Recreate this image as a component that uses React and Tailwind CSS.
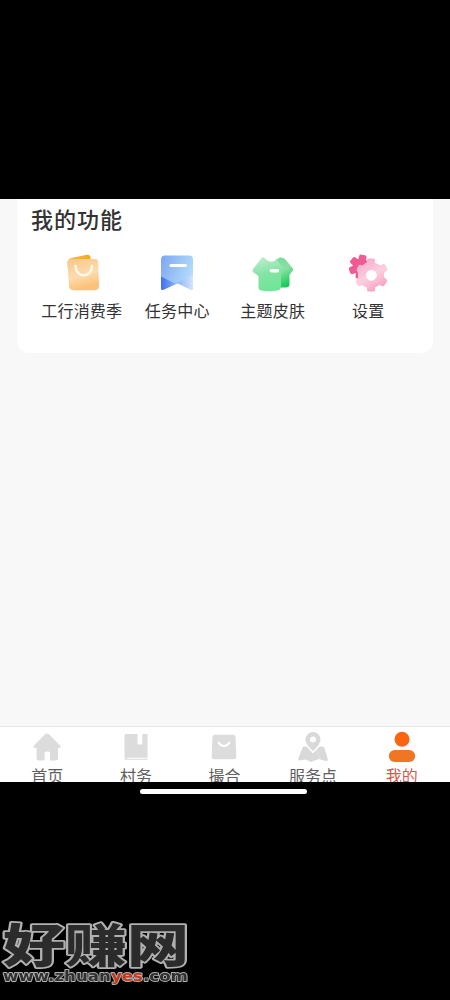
import React, { useState } from 'react'

const BagIcon = () => (
  <svg width="40" height="40" viewBox="0 0 40 40">
    <defs>
      <linearGradient id="bagBack" x1="0" y1="0" x2="1" y2="0">
        <stop offset="0" stopColor="#f3b85c" />
        <stop offset="1" stopColor="#f3ad0c" />
      </linearGradient>
      <linearGradient id="bagFront" x1="0" y1="0" x2="0.3" y2="1">
        <stop offset="0" stopColor="#f8c58c" />
        <stop offset="0.6" stopColor="#fddcae" />
        <stop offset="1" stopColor="#fbc178" />
      </linearGradient>
    </defs>
    <path d="M5.5 10Q5.5 6 9 5L25 1.8Q28 1.6 28.6 4.5V16H6Z" fill="url(#bagBack)" />
    <path d="M8 6H33Q36.3 6 36.2 9L37 33Q37 37 33 37.2H11Q7.2 37 7 33L5.5 11Q5.3 7 8 6Z" fill="url(#bagFront)" />
    <path d="M13.5 13C14 25.5 29.5 25.5 30 13" fill="none" stroke="#fffaf0" strokeWidth="2.4" strokeLinecap="round" />
  </svg>
)

const TaskIcon = () => (
  <svg width="40" height="40" viewBox="0 0 40 40">
    <defs>
      <linearGradient id="task" x1="0" y1="0.2" x2="1" y2="0.6">
        <stop offset="0" stopColor="#82a9f3" />
        <stop offset="0.6" stopColor="#9fcaf8" />
        <stop offset="1" stopColor="#b8dcfb" />
      </linearGradient>
      <linearGradient id="taskLow" x1="0" y1="0" x2="1" y2="0">
        <stop offset="0" stopColor="#416fee" />
        <stop offset="0.5" stopColor="#8eb5f7" />
        <stop offset="1" stopColor="#d1e5fd" />
      </linearGradient>
    </defs>
    <path d="M8 2.5H32Q36 2.5 36 6.5V35Q36 38 33 36.2L20.5 30.3L7 36.5Q4 38 4 35V6.5Q4 2.5 8 2.5Z" fill="url(#task)" />
    <path d="M4 23.5L18 30.5L36 22V35Q36 38 33 36.2L20.5 30.3L7 36.5Q4 38 4 35Z" fill="url(#taskLow)" />
    <path d="M14 12.5H28.5" stroke="#fff" strokeWidth="3" strokeLinecap="round" />
  </svg>
)

const SkinIcon = () => (
  <svg width="44" height="40" viewBox="0 0 44 40">
    <defs>
      <linearGradient id="shirt" x1="0.3" y1="0" x2="0.5" y2="1">
        <stop offset="0" stopColor="#bdeccd" />
        <stop offset="0.5" stopColor="#83e3a3" />
        <stop offset="1" stopColor="#6de796" />
      </linearGradient>
      <linearGradient id="shirtBack" x1="0" y1="0" x2="0.3" y2="1">
        <stop offset="0" stopColor="#74dc98" />
        <stop offset="0.5" stopColor="#88e0a5" />
        <stop offset="1" stopColor="#1bcc5d" />
      </linearGradient>
    </defs>
    <path d="M24 7L29 4.5Q32 4 34 6L41.5 15Q43 17 41 18.5L38.5 22V31Q38.5 34.5 35 34.5H24Z" fill="url(#shirtBack)" />
    <path d="M11 4.5Q13 3.5 15 6.5Q21 11 26 6Q28 11 33 14L30 21V34Q29.5 37 26 37.5Q18 39 10 37.5Q7.5 37 7.5 34V23L2.5 19.5Q1 18 2 16Z" fill="url(#shirt)" />
    <path d="M20.5 17.8H26.5" stroke="#fff" strokeWidth="3.6" strokeLinecap="round" />
  </svg>
)

const teeth = [0, 60, 120, 180, 240, 300]

const SettingIcon = () => (
  <svg width="40" height="40" viewBox="0 0 40 40">
    <defs>
      <linearGradient id="gear" gradientUnits="userSpaceOnUse" x1="12" y1="6" x2="30" y2="38">
        <stop offset="0" stopColor="#f6a8c8" />
        <stop offset="0.55" stopColor="#fbd0e0" />
        <stop offset="1" stopColor="#f89dc0" />
      </linearGradient>
    </defs>
    <g fill="#ef5a95">
      <circle cx="13" cy="14" r="8.5" />
      {teeth.map((a) => (
        <rect key={a} x="9.2" y="1.8" width="7.6" height="8" rx="2" transform={`rotate(${a + 10} 13 14)`} />
      ))}
    </g>
    <path d="M19 9V7Q19 5.5 20.5 5.5H25.5Q27 5.5 27 7V10L33 12.5L35 11Q36.5 10.5 37.3 12L39.3 16Q39.6 17.5 38 18.3L36 20V24L38.3 26Q39.6 27 39 28.5L36.5 32.5Q35.5 33.7 34 33L31.5 32L27 34.5V37Q27 38.5 25.5 38.5H20.5Q19 38.5 19 37V34.5L14 32L12 33Q10.5 33.5 9.5 32L8 29Q7.5 27.5 9 26.5L10 24V20L9 18Q8 17 9 15.5L10.5 12.5Q11.5 11.2 13 12L14 12.5Z" fill="url(#gear)" />
    <circle cx="23.4" cy="22.3" r="5.4" fill="#fff" />
  </svg>
)

const HomeIcon = () => (
  <svg width="34" height="34" viewBox="0 0 34 34" fill="#dcdcdc">
    <path d="M15 4.3Q17 2.5 19 4.3L30 15.5Q31.5 17.7 29 18H28V28Q28 30.5 25.5 30.5H20V23Q20 21.5 18.5 21.5H16Q14.5 21.5 14.5 23V30.5H9Q6.5 30.5 6.5 28V18H5Q2.5 17.7 4 15.5Z" />
  </svg>
)

const VillageIcon = () => (
  <svg width="34" height="34" viewBox="0 0 34 34" fill="#dcdcdc">
    <path d="M7 4H18.5V13Q18.5 14.5 20 14.5H22Q23.3 14.5 23.3 13V4H28.5V27H5.5V5.5Q5.5 4 7 4Z" />
    <path d="M5.5 27H28.5V30H7Q5.5 30 5.5 28.5Z" fill="#e2e2e2" />
    <path d="M8 28.5H28.5" stroke="#fff" strokeWidth="0.8" />
  </svg>
)

const MatchIcon = () => (
  <svg width="34" height="34" viewBox="0 0 34 34">
    <path d="M7.5 4.8H26.5Q28.3 4.8 28.5 6.8L29.3 26.5Q29.3 29.3 27 29.3H7Q4.5 29.3 4.7 26.5L5.5 6.8Q5.7 4.8 7.5 4.8Z" fill="#dcdcdc" />
    <path d="M11.5 12.5C14 17 20 17 22.5 12.5" fill="none" stroke="#fff" strokeWidth="2" strokeLinecap="round" />
  </svg>
)

const PlaceIcon = () => (
  <svg width="34" height="34" viewBox="0 0 34 34" fill="#d9d9d9">
    <path d="M17 2A7.5 7.5 0 0 1 24.5 9.5Q24.5 14.5 17 21Q9.5 14.5 9.5 9.5A7.5 7.5 0 0 1 17 2ZM17 6.5A3 3 0 1 0 17 12.5A3 3 0 1 0 17 6.5Z" fillRule="evenodd" />
    <path d="M6.5 17.5Q7 16.5 8.5 16.5L10.5 16.5L17 23.5L23.5 16.8L26.5 16.5Q28 16.5 28.5 18L31.8 29Q32.3 31.3 30 31L22.5 29L15 32L9.5 29.5L4 30.5Q1.8 30.5 2.3 28.5Z" />
    <path d="M21 20L24 29" stroke="#e8e8e8" strokeWidth="0.8" />
  </svg>
)

const MineIcon = () => (
  <svg width="34" height="34" viewBox="0 0 34 34">
    <circle cx="17" cy="9.3" r="7.5" fill="#fb6510" />
    <rect x="3.8" y="20" width="26.4" height="12" rx="6" fill="#f17624" />
  </svg>
)

const functions = [
  { name: '工行消费季', icon: <BagIcon /> },
  { name: '任务中心', icon: <TaskIcon /> },
  { name: '主题皮肤', icon: <SkinIcon /> },
  { name: '设置', icon: <SettingIcon /> },
]

const tabs = [
  { name: '首页', icon: <HomeIcon /> },
  { name: '村务', icon: <VillageIcon /> },
  { name: '撮合', icon: <MatchIcon /> },
  { name: '服务点', icon: <PlaceIcon /> },
  { name: '我的', icon: <MineIcon /> },
]

const Watermark = () => (
  <svg width="200" height="80" viewBox="0 0 200 80" className="block will-change-transform">
    <g strokeLinejoin="round" paintOrder="stroke">
      <text x="3" y="42" fontSize="46" fontFamily="'Noto Sans CJK SC', sans-serif" fontWeight="900" textLength="186" lengthAdjust="spacingAndGlyphs" fill="#2b2b2b" stroke="#b0b0b0" strokeWidth="3.4">好赚网</text>
      <text x="3" y="61" fontSize="14.5" fontFamily="'DejaVu Sans', sans-serif" fontWeight="700" textLength="185" lengthAdjust="spacingAndGlyphs" fill="#303030" stroke="#b0b0b0" strokeWidth="1.8">www.zhuan<tspan fill="#c23a1c">yes</tspan>.com</text>
    </g>
  </svg>
)

const App = () => {
  const [active, setActive] = useState(4)

  return (
    <div className="flex h-[1000px] w-[450px] flex-col overflow-hidden bg-black pt-[199px] font-['Noto_Sans_CJK_SC',sans-serif]">
      <div className="flex h-[583px] shrink-0 flex-col overflow-hidden bg-[#f8f8f8]">
        <div className="mx-[17px] h-[154px] rounded-b-xl bg-white px-[14px] pt-[3px]">
          <h2 className="text-[22px] leading-8 font-medium tracking-[1px] text-[#333]">我的功能</h2>
          <div className="mx-[3px] mt-[19px] grid grid-cols-4">
            {functions.map((item) => (
              <div key={item.name} className="flex flex-col items-center">
                <div className="flex h-10 justify-center">{item.icon}</div>
                <span className="mt-[5px] text-[16px] leading-6 whitespace-nowrap tracking-[0.2px] text-[#333]">{item.name}</span>
              </div>
            ))}
          </div>
        </div>

        <div className="mt-auto grid h-[56px] grid-cols-5 border-t border-[#e6e6e6] bg-white pr-[4px] pl-[3px]">
          {tabs.map((tab, i) => (
            <div key={tab.name} onClick={() => setActive(i)} className="flex cursor-pointer flex-col items-center pt-[3px]">
              {tab.icon}
              <span className={`-mt-px text-[16px] leading-6 whitespace-nowrap ${active === i ? 'text-[#d9574f]' : 'text-[#606060]'}`}>{tab.name}</span>
            </div>
          ))}
        </div>
      </div>

      <div className="mt-[7px] ml-[140px] h-[5px] w-[167px] shrink-0 rounded-full bg-white"></div>
      <div className="mt-auto h-[80px] shrink-0">
        <Watermark />
      </div>
    </div>
  )
}

export default App
